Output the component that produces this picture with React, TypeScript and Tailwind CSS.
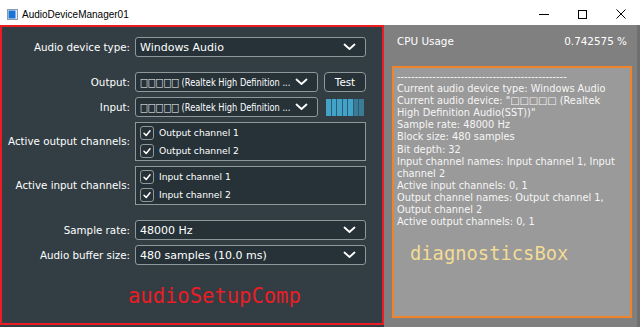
import React from "react";

const sans = "font-['DejaVu_Sans',sans-serif]";
const mono = "font-['DejaVu_Sans_Mono',monospace]";

function Chevron() {
  return (
    <svg width="13" height="8" viewBox="0 0 13 8" className="shrink-0">
      <path
        d="M1.5 1.5 L6.5 6 L11.5 1.5"
        fill="none"
        stroke="white"
        strokeWidth="1.8"
        strokeLinecap="round"
        strokeLinejoin="round"
      />
    </svg>
  );
}

function ComboBox({ value, squeeze = false }: { value: string; squeeze?: boolean }) {
  return (
    <div className="flex h-5 w-full items-center rounded-[3px] border border-[#8e989b] bg-[#263238] pl-[4px] pr-[9px]">
      <div className="min-w-0 flex-1 overflow-hidden whitespace-nowrap text-[11px] leading-none text-white">
        {squeeze ? (
          <span className="inline-block origin-left scale-x-[0.75]">{value}</span>
        ) : (
          value
        )}
      </div>
      <Chevron />
    </div>
  );
}

function CheckBox() {
  return (
    <div className="flex h-[14px] w-[14px] shrink-0 items-center justify-center rounded-[3px] border border-[#8e989b]">
      <svg width="10" height="10" viewBox="0 0 10 10">
        <path
          d="M2 5.2 L4.2 7.4 L8 2.8"
          fill="none"
          stroke="white"
          strokeWidth="1.5"
          strokeLinecap="round"
          strokeLinejoin="round"
        />
      </svg>
    </div>
  );
}

function ChannelList({ items }: { items: string[] }) {
  return (
    <div className="h-[39px] w-full border border-[#8e989b] bg-[#263238] pl-[4px] pt-[1px]">
      {items.map((item) => (
        <div key={item} className="flex h-[18px] items-center gap-[5px]">
          <CheckBox />
          <span className="text-[9.2px] text-white">{item}</span>
        </div>
      ))}
    </div>
  );
}

interface RowProps {
  label: string;
  className?: string;
  children: React.ReactNode;
}

function Row({ label, className = "", children }: RowProps) {
  return (
    <div className={`flex items-center ${className}`}>
      <div className="w-[128px] whitespace-nowrap pt-px text-right text-[10.3px] text-white">{label}</div>
      <div className="ml-[5px] flex w-[231px] items-center">{children}</div>
    </div>
  );
}

function LevelMeter({ lit, total }: { lit: number; total: number }) {
  return (
    <div className="ml-[8px] flex h-[17px] w-[38px] gap-px bg-[#2b5d72]">
      {Array.from({ length: total }, (_, i) => (
        <div key={i} className={i < lit ? "flex-1 bg-[#42a2c8]" : "flex-1 bg-[#3a7b96]"} />
      ))}
    </div>
  );
}

const tofu = "\u25A1\u25A1\u25A1\u25A1\u25A1";

const diagnostics = [
  "-".repeat(48),
  "Current audio device type: Windows Audio",
  `Current audio device: "${tofu} (Realtek`,
  'High Definition Audio(SST))"',
  "Sample rate: 48000 Hz",
  "Block size: 480 samples",
  "Bit depth: 32",
  "Input channel names: Input channel 1, Input",
  "channel 2",
  "Active input channels: 0, 1",
  "Output channel names: Output channel 1,",
  "Output channel 2",
  "Active output channels: 0, 1",
];

function TitleBar() {
  return (
    <div className="flex h-[25px] items-center bg-white pt-[3px]">
      <svg width="11" height="11" viewBox="0 0 11 11" className="ml-[7px]">
        <rect x="0.5" y="0.5" width="10" height="10" fill="#e8eef4" stroke="#8a9aa8" />
        <rect x="1.5" y="1.5" width="7" height="8" fill="#1874d8" />
      </svg>
      <span className="ml-[4px] font-['Liberation_Sans',sans-serif] text-[10px] text-black">
        AudioDeviceManager01
      </span>
      <div className="ml-auto flex h-full items-center">
        <div className="flex w-[38px] justify-center">
          <div className="h-px w-[10px] bg-black" />
        </div>
        <div className="flex w-[38px] justify-center">
          <div className="h-[9px] w-[9px] border border-black" />
        </div>
        <div className="flex w-[39px] justify-center">
          <svg width="10" height="10" viewBox="0 0 10 10">
            <path d="M0.5 0.5 L9.5 9.5 M9.5 0.5 L0.5 9.5" stroke="black" strokeWidth="1" />
          </svg>
        </div>
      </div>
    </div>
  );
}

export default function App() {
  return (
    <div className={`h-[327px] w-[640px] overflow-hidden ${sans}`}>
      <TitleBar />
      <div className="flex h-[302px]">
        <div className="w-[384px] bg-[#323e44]">
          <div className="h-[300px] border-2 border-[#ec1c24] pt-[10px]">
            <Row label="Audio device type:">
              <ComboBox value="Windows Audio" />
            </Row>
            <Row label="Output:" className="mt-[15px]">
              <div className="w-[183px]">
                <ComboBox value={`${tofu} (Realtek High Definition ...`} squeeze />
              </div>
              <button className="ml-[6px] h-5 w-[42px] rounded-[4px] border border-[#8e989b] bg-[#263238] text-[10.3px] leading-none text-white">
                Test
              </button>
            </Row>
            <Row label="Input:" className="mt-[5px]">
              <div className="w-[183px]">
                <ComboBox value={`${tofu} (Realtek High Definition ...`} squeeze />
              </div>
              <LevelMeter lit={5} total={7} />
            </Row>
            <Row label="Active output channels:" className="mt-[5px]">
              <ChannelList items={["Output channel 1", "Output channel 2"]} />
            </Row>
            <Row label="Active input channels:" className="mt-[5px]">
              <ChannelList items={["Input channel 1", "Input channel 2"]} />
            </Row>
            <Row label="Sample rate:" className="mt-[15px]">
              <ComboBox value="48000 Hz" />
            </Row>
            <Row label="Audio buffer size:" className="mt-[5px]">
              <ComboBox value="480 samples (10.0 ms)" />
            </Row>
            <div className={`mt-[21px] pl-[126px] text-[20.5px] leading-none text-[#ec1c24] ${mono}`}>
              audioSetupComp
            </div>
          </div>
        </div>
        <div className="flex w-[253px] flex-col bg-[#808080]">
          <div className="mt-[10px] flex h-[13px] items-center justify-between pl-[13px] pr-[10px] text-[10.4px] text-white">
            <span>CPU Usage</span>
            <span>0.742575 %</span>
          </div>
          <div className="ml-[8px] mt-[18px] h-[252px] w-[240px] border-2 border-[#f0822a] bg-[#9a9a9a] px-[3px] pt-[3px]">
            {diagnostics.map((line, i) => (
              <div key={i} className="whitespace-nowrap text-[9.8px] leading-[12.1px] text-[#f6f6f6]">
                {line}
              </div>
            ))}
            <div className={`ml-[13px] mt-[17px] text-[18.8px] leading-none text-[#f2dc96] ${mono}`}>
              diagnosticsBox
            </div>
          </div>
        </div>
        <div className="w-[3px] bg-[#6f6f6f]" />
      </div>
    </div>
  );
}
